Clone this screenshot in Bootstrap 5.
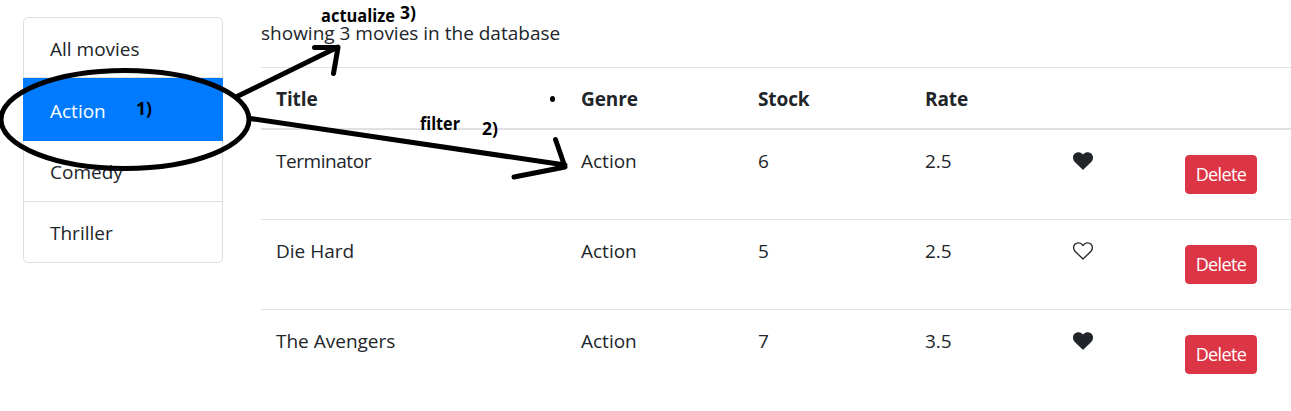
<!DOCTYPE html>
<html lang="en">
<head>
<meta charset="utf-8">
<meta name="viewport" content="width=device-width, initial-scale=1">
<title>Movies</title>
<link href="https://cdn.jsdelivr.net/npm/bootstrap@5.3.0/dist/css/bootstrap.min.css" rel="stylesheet">
<style>
  body { font-family: "Open Sans", "Noto Sans", sans-serif; font-size: 19px; line-height: 30px; color: #212529; background: #fff; height: 411px; overflow: hidden; }
  .page { padding: 17px 0 0 23px; gap: 38px; }
  .genres { width: 200px; --bs-list-group-border-color: #dfdfdf; --bs-list-group-border-radius: 5px; --bs-list-group-color: #212529; --bs-list-group-active-bg: #007bff; --bs-list-group-active-border-color: #007bff; }
  .genres .list-group-item { padding: 16px 26px 0; height: 61px; }
  .genres .list-group-item.active { height: 63px; padding-top: 17px; margin-top: 0; }
  .summary { margin: 1px 0 19px; height: 30px; }
  .movies { width: 1030px; table-layout: fixed; border-collapse: separate; border-spacing: 0; --bs-table-color: #212529; --bs-table-bg: transparent; }
  .movies > :not(caption) > * > * { padding: 16px 0 0 15px; border: 0 solid #dee2e6; vertical-align: top; }
  .movies > thead th { height: 63px; border-width: 1px 0 2px; font-weight: 700; letter-spacing: -.1px; }
  .movies > tbody td { height: 90px; border-top-width: 1px; }
  .movies > tbody tr:first-child td { height: 89px; border-top-width: 0; }
  .movies tr:first-child td:first-child { letter-spacing: -.45px; }
  .movies .btn { --bs-btn-bg: #dc3545; --bs-btn-border-color: #dc3545; --bs-btn-border-radius: 4px; --bs-btn-font-size: 18px; width: 72px; height: 39px; padding: 0; line-height: 35px; margin-top: 9px; display: block; letter-spacing: -.6px; }
  .heart { display: block; width: 21px; height: 18px; margin: 6px 0 0 1px; }
  .notes { left: 0; top: 0; z-index: 10; pointer-events: none; font-family: "Open Sans", sans-serif; }
</style>
</head>
<body>
<div class="page d-flex align-items-start">
  <ul class="list-group genres flex-shrink-0">
    <li class="list-group-item">All movies</li>
    <li class="list-group-item active">Action</li>
    <li class="list-group-item">Comedy</li>
    <li class="list-group-item">Thriller</li>
  </ul>
  <main class="flex-shrink-0">
    <p class="summary">showing 3 movies in the database</p>
    <table class="table movies mb-0">
      <colgroup><col style="width:305px"><col style="width:177px"><col style="width:167px"><col style="width:147px"><col style="width:113px"><col style="width:121px"></colgroup>
      <thead><tr><th>Title</th><th>Genre</th><th>Stock</th><th>Rate</th><th></th><th></th></tr></thead>
      <tbody>
        <tr><td>Terminator</td><td>Action</td><td>6</td><td>2.5</td><td><svg class="heart" viewBox="0 0 21 18"><use href="#heart" fill="currentColor"/></svg></td><td><button class="btn btn-danger">Delete</button></td></tr>
        <tr><td>Die Hard</td><td>Action</td><td>5</td><td>2.5</td><td><svg class="heart" viewBox="0 0 21 18"><use href="#heart" fill="none"/></svg></td><td><button class="btn btn-danger">Delete</button></td></tr>
        <tr><td>The Avengers</td><td>Action</td><td>7</td><td>3.5</td><td><svg class="heart" viewBox="0 0 21 18"><use href="#heart" fill="currentColor"/></svg></td><td><button class="btn btn-danger">Delete</button></td></tr>
      </tbody>
    </table>
  </main>
</div>
<!-- hand-drawn annotations over the page -->
<svg class="notes position-absolute" width="1291" height="411" viewBox="0 0 1291 411">
  <defs><path id="heart" d="M10 17 L2 9.2 C.2 7.300 .2 3.900 1.900 2.200 C3.700.400 7.200.300 9 2.400 L10 3.500 L11 2.400 C12.800.300 16.300.400 18.100 2.200 C19.800 3.900 19.800 7.300 18 9.200 Z" stroke="#212529" stroke-width="1.300" stroke-linejoin="round"/></defs>
  <g fill="none" stroke="#000" stroke-width="5" stroke-linecap="round" stroke-linejoin="round">
    <ellipse cx="125" cy="119.500" rx="124" ry="49"/>
    <path d="M236 97 L338 47 M314.500 47.500 H338 L333.500 73.500"/>
    <path d="M250 118.500 L565 165 M555.500 139.500 L565 167 L514 177"/>
  </g>
  <ellipse cx="552.500" cy="99" rx="2.500" ry="3"/>
  <g font-size="17" font-weight="700" fill="#000">
    <text x="136" y="115" textLength="16" lengthAdjust="spacingAndGlyphs">1)</text>
    <text x="321" y="22" textLength="74" lengthAdjust="spacingAndGlyphs">actualize</text>
    <text x="400" y="19" textLength="16" lengthAdjust="spacingAndGlyphs">3)</text>
    <text x="420" y="130" textLength="40" lengthAdjust="spacingAndGlyphs">filter</text>
    <text x="482" y="135" textLength="16" lengthAdjust="spacingAndGlyphs">2)</text>
  </g>
</svg>
<script src="https://cdn.jsdelivr.net/npm/bootstrap@5.3.0/dist/js/bootstrap.bundle.min.js"></script>
</body>
</html>
